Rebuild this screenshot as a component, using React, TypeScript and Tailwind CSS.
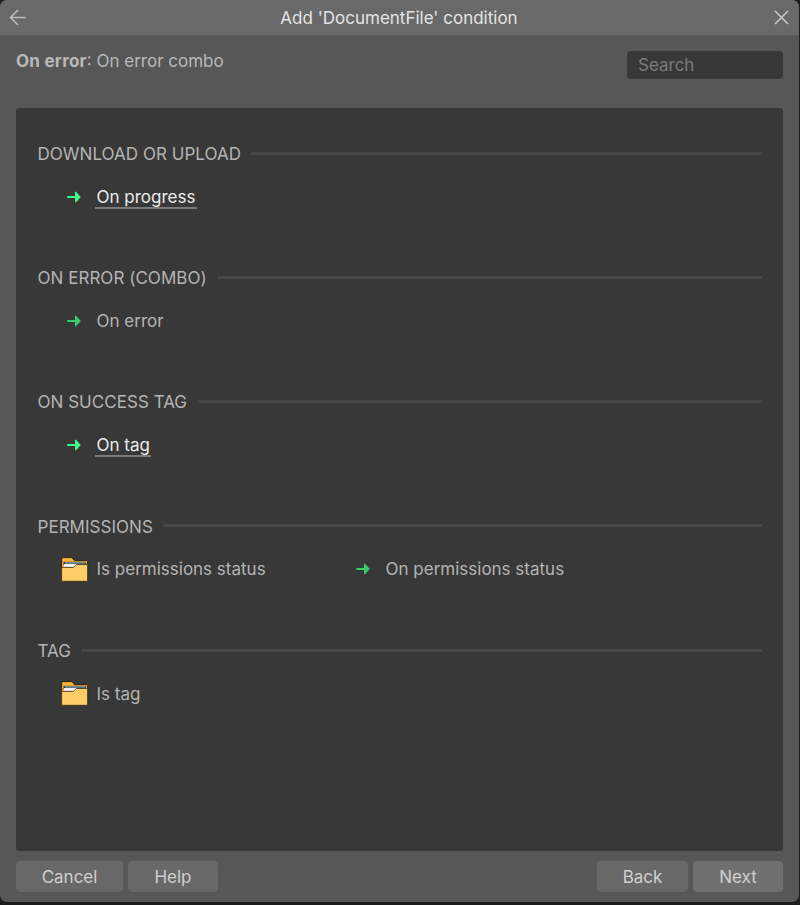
type Condition = {
  label: string;
  kind: 'trigger' | 'state';
  highlighted?: boolean;
};

type Group = {
  title: string;
  items: Condition[];
};

const groups: Group[] = [
  { title: 'DOWNLOAD OR UPLOAD', items: [{ label: 'On progress', kind: 'trigger', highlighted: true }] },
  { title: 'ON ERROR (COMBO)', items: [{ label: 'On error', kind: 'trigger' }] },
  { title: 'ON SUCCESS TAG', items: [{ label: 'On tag', kind: 'trigger', highlighted: true }] },
  {
    title: 'PERMISSIONS',
    items: [
      { label: 'Is permissions status', kind: 'state' },
      { label: 'On permissions status', kind: 'trigger' },
    ],
  },
  { title: 'TAG', items: [{ label: 'Is tag', kind: 'state' }] },
];

function TriggerIcon({ bright }: { bright?: boolean }) {
  return (
    <svg width="14" height="12" viewBox="0 0 14 12" className={`mb-px mr-px ${bright ? 'text-[#43fb82]' : 'text-[#3ccb6c]'}`}>
      <path d="M0.3 4.9H8V0.8H9L13.8 6L9 11.2H8V7.1H0.3Z" fill="currentColor" />
    </svg>
  );
}

function FolderIcon() {
  return (
    <svg width="28" height="26" viewBox="0 0 28 26">
      <path d="M0.6 24V2Q0.6 0.6 2 0.6H11L13.5 3.6H25.4Q26.6 3.6 26.6 4.6V23Q26.6 24.3 25.2 24.3H2Q0.6 24.3 0.6 23Z" fill="#f9b233" stroke="#2b2113" />
      <path d="M2.5 4.8H25V8H2.5Z" fill="#35383a" />
      <path d="M4 5.2H24.5V6.6H4Z" fill="#7fa6ad" />
      <path d="M3 7H16L14 10H3Z" fill="#f1f1f5" />
      <path d="M0.6 10.4H12.5L15.5 7.4H26.6V23.2Q26.6 24.3 25.5 24.3H1.7Q0.6 24.3 0.6 23.2Z" fill="#ffcc6a" stroke="#3a2e1a" strokeWidth="0.8" />
    </svg>
  );
}

function ConditionItem({ item }: { item: Condition }) {
  return (
    <div className="w-[289px] h-8 flex items-center">
      <div className="w-[35px] flex justify-center shrink-0">
        {item.kind === 'trigger' ? <TriggerIcon bright={item.highlighted} /> : <FolderIcon />}
      </div>
      <span
        className={`h-[22px] mt-px ml-[3px] px-[1.5px] leading-[20px] border-b-2 ${item.highlighted ? 'text-[#ececec] border-[#7b7b7b]' : 'text-[#b4b4b4] border-transparent'}`}
      >
        {item.label}
      </span>
    </div>
  );
}

function DialogButton({ label, className }: { label: string; className: string }) {
  return <button className={`h-[31px] rounded-[4px] text-[#d0d0d0] leading-[31px] pt-px ${className}`}>{label}</button>;
}

export default function App() {
  return (
    <div className="w-[800px] h-[905px] bg-[#1d1d1d] font-[Inter,sans-serif] text-[17px] overflow-hidden">
      <div className="w-[799px] h-[902px] rounded-[7px] bg-[#575757] flex flex-col overflow-hidden">
        {/* Title bar */}
        <div className="h-[35px] shrink-0 bg-[#696969] flex items-center justify-between pl-[9px] pr-[10px]">
          <svg width="18" height="18" viewBox="0 0 18 18" fill="none" stroke="#bdbdbd" strokeWidth="1.6">
            <path d="M16.5 8.5H1.5M9 1L1.5 8.5L9 16" />
          </svg>
          <h1 className="text-[#e4e4e4] pt-[2px] pr-[3px]">Add 'DocumentFile' condition</h1>
          <svg width="15" height="15" viewBox="0 0 15 15" fill="none" stroke="#cccccc" strokeWidth="1.5">
            <path d="M1 1L14 14M14 1L1 14" />
          </svg>
        </div>

        {/* Path and search */}
        <div className="h-[73px] shrink-0 flex justify-between px-4 pt-4">
          <p className="text-[#b9b9b9] leading-[21px]"><b className="tracking-[0.25px]">On error</b>: On error combo</p>
          <input
            placeholder="Search"
            className="w-[156px] h-7 rounded-[4px] bg-[#383838] px-[11px] text-[#b4b4b4] placeholder:text-[#7b7b7b] outline-none"
          />
        </div>

        {/* Conditions */}
        <div className="mx-4 h-[743px] shrink-0 rounded-[3px] bg-[#383838] pt-[35px] px-[21px]">
          {groups.map(group => (
            <section key={group.title} className="h-[124.25px]">
              <div className="h-[22px] flex items-center gap-[10.5px]">
                <h2 className="text-[#b4b4b4] pt-px pl-[0.5px] tracking-[0.03px]">{group.title}</h2>
                <div className="h-[3px] mb-[2px] grow rounded-full bg-[#484848]" />
              </div>
              <div className="flex pl-5 mt-4">
                {group.items.map(item => <ConditionItem key={item.label} item={item} />)}
              </div>
            </section>
          ))}
        </div>

        {/* Buttons */}
        <div className="flex mx-4 mt-[10px]">
          <DialogButton label="Cancel" className="w-[107px] bg-[#686868]" />
          <DialogButton label="Help" className="w-[90px] ml-[5px] bg-[#686868]" />
          <DialogButton label="Back" className="w-[91px] ml-auto bg-[#686868]" />
          <DialogButton label="Next" className="w-[90px] ml-[5px] bg-[#707070]" />
        </div>
      </div>
    </div>
  );
}
